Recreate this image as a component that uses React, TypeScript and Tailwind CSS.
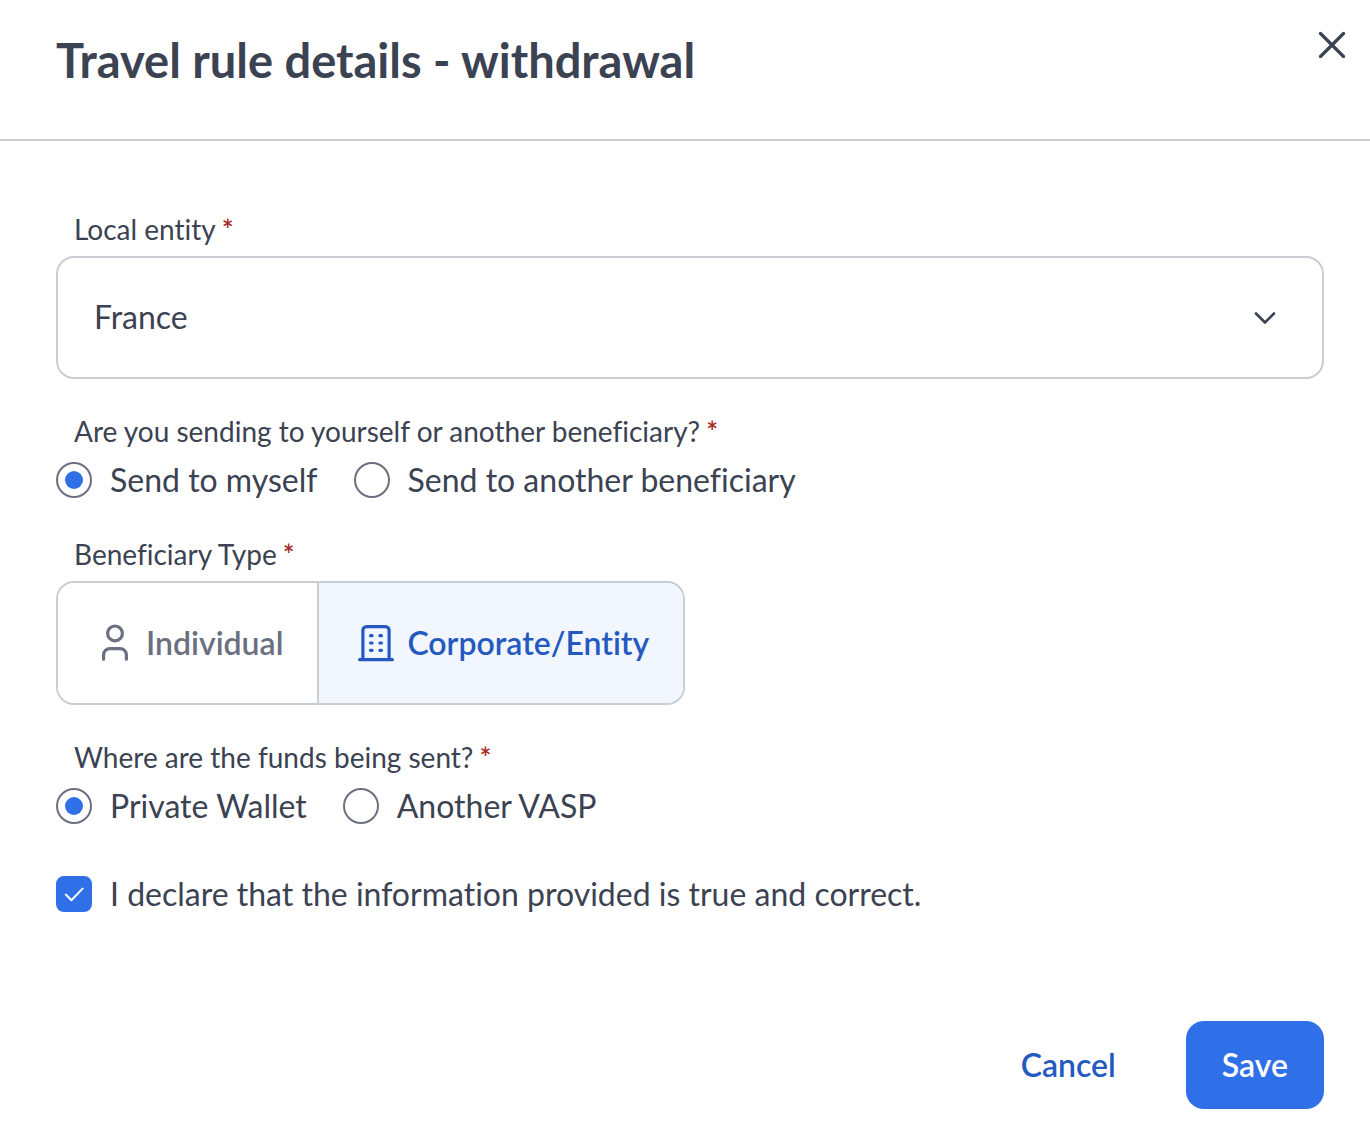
import { useState } from "react";
import type { ReactNode } from "react";

const fundsOptions = ["Private Wallet", "Another VASP"];
const sendOptions = ["Send to myself", "Send to another beneficiary"];

const labelStyle = "block px-[18px] pb-[9px] text-[28px] leading-9";

function Required() {
	return <span className="ml-1.5 font-semibold text-[#a82a25]" aria-hidden="true">*</span>;
}

// Radio question, the options sit next to each other on one row
function RadioField({ name, label, options }: { name: string; label: string; options: string[] }) {
	const [value, setValue] = useState(options[0]);

	return (
		<fieldset>
			<legend className={labelStyle}>
				{label}
				<Required />
			</legend>
			<div className="flex flex-wrap gap-x-9">
				{options.map((option) => (
					<label key={option} className="flex h-11 cursor-pointer items-center gap-[18px]">
						<input
							type="radio"
							name={name}
							value={option}
							checked={value === option}
							onChange={() => setValue(option)}
							className="grid size-9 shrink-0 appearance-none place-items-center rounded-full border-2 border-[#6b7080] before:size-[18px] before:rounded-full checked:before:bg-[#2f70e8]"
						/>
						{option}
					</label>
				))}
			</div>
		</fieldset>
	);
}

function TypeButton({ active, onClick, icon, children }: { active: boolean; onClick: () => void; icon: ReactNode; children: ReactNode }) {
	return (
		<button
			type="button"
			aria-pressed={active}
			onClick={onClick}
			className={`flex h-[120px] cursor-pointer items-center gap-2.5 pr-[34px] pl-9 font-semibold ${active ? "bg-[#f1f6ff] text-[#245abf]" : "bg-white text-[#6b7080]"}`}
		>
			{icon}
			{children}
		</button>
	);
}

const personIcon = (
	<svg viewBox="0 0 42 42" className="size-[42px]" fill="none" stroke="currentColor" strokeWidth="3.2" strokeLinecap="round" strokeLinejoin="round">
		<circle cx="21" cy="11.4" r="7.4" />
		<path d="M9.6 37.2v-4.2a6.4 6.4 0 0 1 6.4-6.4h10a6.4 6.4 0 0 1 6.4 6.4v4.2" />
	</svg>
);

const buildingIcon = (
	<svg viewBox="0 0 42 42" className="size-[42px]" fill="none" stroke="currentColor" strokeWidth="3.2" strokeLinecap="round" strokeLinejoin="round">
		<path d="M4.6 37.7h32.8M7.9 37.7V8.2a3.6 3.6 0 0 1 3.6-3.6h19a3.6 3.6 0 0 1 3.6 3.6v29.5" />
		<path d="M15.5 13.7h1.6M24.9 13.7h1.6M15.5 21h1.6M24.9 21h1.6M15.5 28.3h1.6M24.9 28.3h1.6" />
	</svg>
);

export default function App() {
	const [type, setType] = useState("corporate");
	const [declared, setDeclared] = useState(true);

	return (
		<div className="min-h-screen bg-white font-['Lato',sans-serif] text-[32px] leading-[44px] text-[#3b4252] [font-variant-ligatures:none]">
			<header className="flex items-start justify-between border-b-2 border-[#c9cdd4] pt-7 pr-[18px] pb-[47px] pl-14">
				<h1 className="text-[47px] leading-[64px] font-bold">Travel rule details - withdrawal</h1>
				<button type="button" aria-label="Close" className="-mt-1 cursor-pointer p-1.5">
					<svg viewBox="0 0 28 28" className="size-7" fill="none" stroke="currentColor" strokeWidth="3.2" strokeLinecap="round">
						<path d="M2.5 3.5l23 23M25.5 3.5l-23 23" />
					</svg>
				</button>
			</header>

			<form className="flex flex-col gap-[34px] pt-[70px] pr-[46px] pb-5 pl-14" onSubmit={(e) => e.preventDefault()}>
				<div>
					<label htmlFor="entity" className={labelStyle}>
						Local entity
						<Required />
					</label>
					<div className="relative">
						<select id="entity" defaultValue="France" className="block h-[123px] w-full appearance-none rounded-[18px] border-2 border-[#c9cdd4] bg-white px-9 pb-0.5">
							<option>France</option>
							<option>Germany</option>
							<option>Spain</option>
						</select>
						<svg viewBox="0 0 24 24" className="pointer-events-none absolute inset-y-0 right-[47px] my-auto size-6" fill="none" stroke="currentColor" strokeWidth="2.6" strokeLinecap="round" strokeLinejoin="round">
							<path d="M3 7.5l9 9 9-9" />
						</svg>
					</div>
				</div>

				<RadioField name="beneficiary" label="Are you sending to yourself or another beneficiary?" options={sendOptions} />

				<fieldset>
					<legend className={labelStyle}>
						Beneficiary Type
						<Required />
					</legend>
					<div className="flex w-fit divide-x-2 divide-[#c9cdd4] overflow-hidden rounded-[18px] border-2 border-[#c9cdd4]">
						<TypeButton active={type === "individual"} onClick={() => setType("individual")} icon={personIcon}>
							Individual
						</TypeButton>
						<TypeButton active={type === "corporate"} onClick={() => setType("corporate")} icon={buildingIcon}>
							Corporate/Entity
						</TypeButton>
					</div>
				</fieldset>

				<RadioField name="funds" label="Where are the funds being sent?" options={fundsOptions} />

				<label className="flex cursor-pointer items-center gap-[18px] pt-[10px]">
					<span className="relative size-9 shrink-0">
						<input
							type="checkbox"
							checked={declared}
							onChange={(e) => setDeclared(e.target.checked)}
							className="block size-9 appearance-none rounded-lg border-2 border-[#6b7080] checked:border-[#2f70e8] checked:bg-[#2f70e8]"
						/>
						<svg viewBox="0 0 36 36" className="pointer-events-none absolute inset-0 size-9" fill="none" stroke="white" strokeWidth="2" strokeLinecap="round" strokeLinejoin="round">
							<path d="M9.8 18.5l5.6 5.7L26.6 12.6" />
						</svg>
					</span>
					I declare that the information provided is true and correct.
				</label>

				<div className="mt-[71px] flex justify-end gap-[34px] font-semibold">
					<button type="button" className="h-[88px] cursor-pointer rounded-[18px] px-9 text-[#245abf]">Cancel</button>
					<button type="submit" className="h-[88px] cursor-pointer rounded-[18px] bg-[#2f70e8] px-9 text-white">Save</button>
				</div>
			</form>
		</div>
	);
}
